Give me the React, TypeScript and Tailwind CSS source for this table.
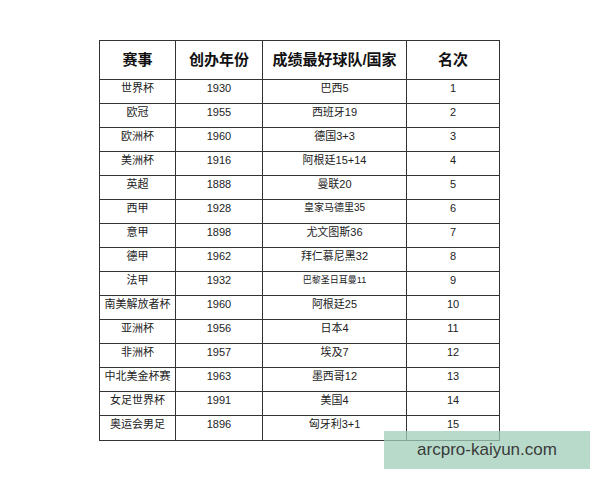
import React from 'react'

interface Row {
	name: string
	year: string
	best: string
	rank: string
	small?: string
}

const rows: Row[] = [
	{ name: '世界杯', year: '1930', best: '巴西5', rank: '1' },
	{ name: '欧冠', year: '1955', best: '西班牙19', rank: '2' },
	{ name: '欧洲杯', year: '1960', best: '德国3+3', rank: '3' },
	{ name: '美洲杯', year: '1916', best: '阿根廷15+14', rank: '4' },
	{ name: '英超', year: '1888', best: '曼联20', rank: '5' },
	{ name: '西甲', year: '1928', best: '皇家马德里35', rank: '6', small: 'text-[10px]' },
	{ name: '意甲', year: '1898', best: '尤文图斯36', rank: '7' },
	{ name: '德甲', year: '1962', best: '拜仁慕尼黑32', rank: '8' },
	{ name: '法甲', year: '1932', best: '巴黎圣日耳曼11', rank: '9', small: 'text-[9px]' },
	{ name: '南美解放者杯', year: '1960', best: '阿根廷25', rank: '10' },
	{ name: '亚洲杯', year: '1956', best: '日本4', rank: '11' },
	{ name: '非洲杯', year: '1957', best: '埃及7', rank: '12' },
	{ name: '中北美金杯赛', year: '1963', best: '墨西哥12', rank: '13' },
	{ name: '女足世界杯', year: '1991', best: '美国4', rank: '14' },
	{ name: '奥运会男足', year: '1896', best: '匈牙利3+1', rank: '15' }
]

const font = "font-['Liberation_Sans','Noto_Sans_CJK_SC',sans-serif]"

export default function App() {
	return (
		<div className={`relative w-[600px] h-[480px] bg-white text-[#222] ${font}`}>
			<div className="pl-[99px] pt-[40px]">
				<div className="w-[401px] border border-[#333]">
					<div className="grid grid-cols-[76px_87px_144px_92px] h-[39px] border-b border-[#333] text-[15px] font-bold text-[#111]">
						<div className="flex items-center justify-center border-r border-[#333]">赛事</div>
						<div className="flex items-center justify-center border-r border-[#333]">创办年份</div>
						<div className="flex items-center justify-center border-r border-[#333]">成绩最好球队/国家</div>
						<div className="flex items-center justify-center">名次</div>
					</div>
					{rows.map((r, idx) => (
						<div
							key={idx}
							className={`grid grid-cols-[76px_87px_144px_92px] h-[24px] text-[11px] leading-[16px] ${
								idx < rows.length - 1 ? 'border-b border-[#333]' : ''
							}`}>
							<div className="text-center border-r border-[#333]">{r.name}</div>
							<div className="text-center border-r border-[#333]">{r.year}</div>
							<div className={`text-center border-r border-[#333] ${r.small ?? ''}`}>{r.best}</div>
							<div className="text-center">{r.rank}</div>
						</div>
					))}
				</div>
			</div>

			{/* watermark */}
			<div className="absolute left-[384px] top-[431px] w-[206px] h-[38px] flex items-center justify-center bg-[rgba(160,205,185,0.75)] text-[17px] text-[#3a3a3a]">
				arcpro-kaiyun.com
			</div>
		</div>
	)
}
